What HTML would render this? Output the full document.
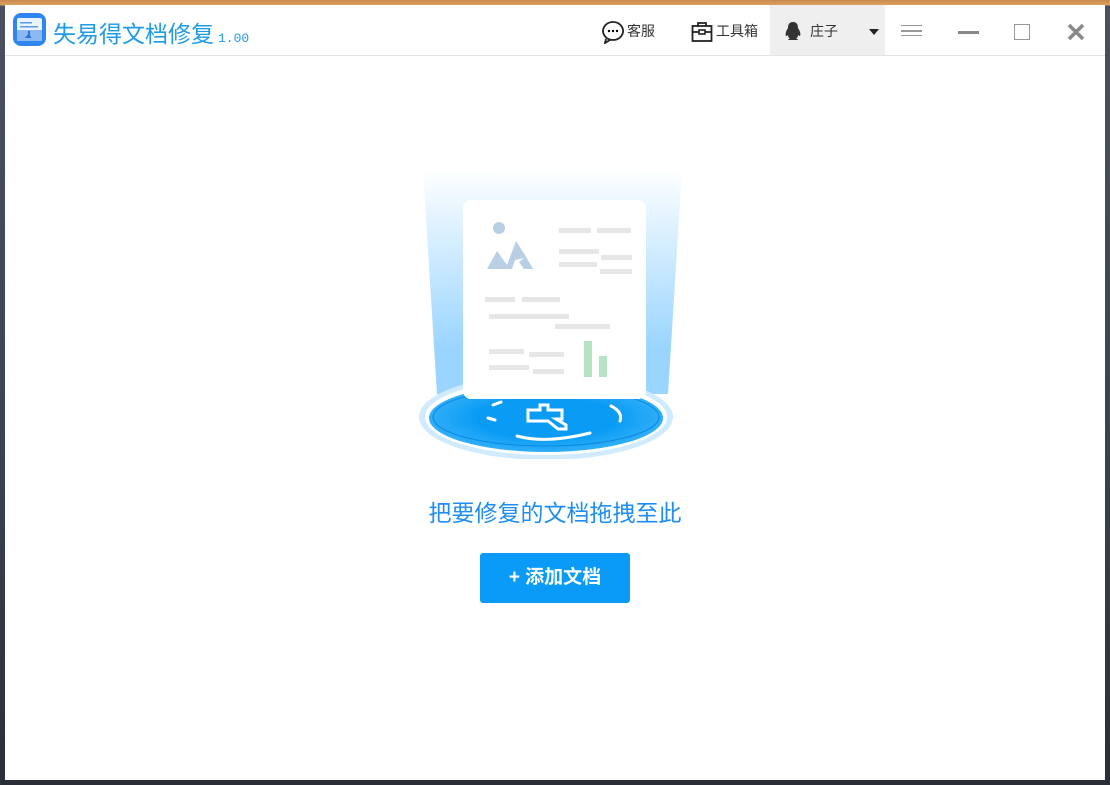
<!DOCTYPE html>
<html><head><meta charset="utf-8"><style>
*{margin:0;padding:0;box-sizing:border-box}
body{width:1110px;height:785px;overflow:hidden;background:linear-gradient(180deg,#c98a4a 0,#d9a060 5px,#4a5060 6px,#3a4250 60%,#2a2e36 100%);position:relative;font-family:"Liberation Sans","Noto Sans CJK SC",sans-serif}
.win{position:absolute;left:5px;top:5px;width:1100px;height:775px;background:#fff}
.hdr{position:absolute;left:0;top:0;width:1100px;height:51px;border-bottom:1px solid #e4e4e4}
.title{position:absolute;left:48px;top:10px;font-size:23px;color:#1e9be8;letter-spacing:0}
.ver{font-family:"Liberation Mono",monospace;font-size:13px;color:#1e9be8;margin-left:4px}
.it{position:absolute;top:16px;font-size:14px;color:#333}
</style></head><body>
<div class="win">
<div class="hdr">
<svg style="position:absolute;left:8px;top:8px" width="33" height="33" viewBox="0 0 33 33"><rect x="0" y="0" width="33" height="33" rx="8" fill="#2f86f0"/><rect x="4" y="5" width="25" height="23" rx="2" fill="#eaf3ff"/><rect x="4" y="17" width="25" height="11" fill="#8bb8f3"/><rect x="7" y="9" width="12" height="1.5" fill="#5a9be8"/><rect x="7" y="13" width="18" height="1.5" fill="#5a9be8"/><path d="M16 18 v4 l-2 2 h4" stroke="#2f6fd8" stroke-width="2" fill="none"/></svg>
<div class="title">失易得文档修复<span class="ver">1.00</span></div>
<svg style="position:absolute;left:596px;top:15px" width="24" height="24" viewBox="0 0 24 24"><path d="M12 2a10 9 0 1 0 0.1 0zM5 19l-1 4 5-3" fill="none" stroke="#222" stroke-width="1.8"/><circle cx="8" cy="11" r="1.2"/><circle cx="12" cy="11" r="1.2"/><circle cx="16" cy="11" r="1.2"/></svg>
<div class="it" style="left:622px">客服</div>
<svg style="position:absolute;left:686px;top:16px" width="22" height="22" viewBox="0 0 22 22"><rect x="1.5" y="5" width="19" height="15" fill="none" stroke="#222" stroke-width="1.8"/><path d="M7 5V2h8v3M1.5 11h19" stroke="#222" stroke-width="1.8" fill="none"/><rect x="8" y="9" width="6" height="4" fill="#fff" stroke="#222" stroke-width="1.6"/></svg>
<div class="it" style="left:711px">工具箱</div>
<div style="position:absolute;left:765px;top:0;width:115px;height:50px;background:#efefef"></div>
<svg style="position:absolute;left:778px;top:16px" width="20" height="22" viewBox="0 0 20 22"><path d="M10 1c-4 0-5 3-5 6-2 3-3 6-2 8 1 0 2-1 2-1 0 2 1 3 2 4-2 0-3 1-1 1h8c2 0 1-1-1-1 1-1 2-2 2-4 0 0 1 1 2 1 1-2 0-5-2-8 0-3-1-6-5-6z" fill="#333"/></svg>
<div class="it" style="left:805px">庄子</div>
<div style="position:absolute;left:864px;top:24px;border:5px solid transparent;border-top:6px solid #222;border-bottom:0"></div>
<div style="position:absolute;left:896px;top:20px;width:21px;height:11px;border-top:1.5px solid #999;border-bottom:1.5px solid #999"></div>
<div style="position:absolute;left:896px;top:25px;width:21px;height:1.5px;background:#999"></div>
<div style="position:absolute;left:953px;top:26px;width:21px;height:3px;background:#888"></div>
<div style="position:absolute;left:1009px;top:19px;width:16px;height:16px;border:1.5px solid #999"></div>
<svg style="position:absolute;left:1062px;top:18px" width="18" height="18" viewBox="0 0 18 18"><path d="M2 2L16 16M16 2L2 16" stroke="#888" stroke-width="3.5"/></svg>
</div>
<svg style="position:absolute;left:410px;top:154px" width="270" height="300" viewBox="0 0 270 300">
<defs><linearGradient id="b" x1="0" y1="0" x2="0" y2="1"><stop offset="0" stop-color="#fff"/><stop offset="0.8" stop-color="#8fd0ff"/></linearGradient>
<radialGradient id="d" cx="0.5" cy="0.5" r="0.5"><stop offset="0.6" stop-color="#0a9cf5"/><stop offset="1" stop-color="#30aef8"/></radialGradient></defs>
<path d="M8 10H267L253 235H22Z" fill="url(#b)" opacity="0.9"/>
<ellipse cx="131" cy="258" rx="127" ry="43" fill="#d0ebff"/>
<ellipse cx="131" cy="258" rx="121" ry="38" fill="#fff"/>
<ellipse cx="131" cy="259" rx="117" ry="34" fill="url(#d)"/>
<ellipse cx="131" cy="258" rx="113" ry="29" fill="none" stroke="#0a88dd" stroke-width="1"/>
<rect x="48" y="41" width="183" height="199" rx="8" fill="#fff"/>
<circle cx="84" cy="69" r="6" fill="#b8cfe6"/>
<path d="M72 110 L82 92 L92 106 L101 82 L110 96 L118 110 L109 110 L104 103 L109 99 L100 101 L97 110 Z" fill="#b8cfe6"/>
<g fill="#e6e6e6"><rect x="144" y="69" width="32" height="5"/><rect x="182" y="69" width="34" height="5"/><rect x="144" y="90" width="40" height="5"/><rect x="186" y="96" width="31" height="5"/><rect x="144" y="103" width="38" height="5"/><rect x="185" y="110" width="32" height="5"/><rect x="70" y="138" width="30" height="5"/><rect x="107" y="138" width="38" height="5"/><rect x="74" y="155" width="80" height="5"/><rect x="140" y="165" width="55" height="5"/><rect x="74" y="190" width="35" height="5"/><rect x="114" y="193" width="35" height="5"/><rect x="74" y="206" width="40" height="5"/><rect x="118" y="210" width="31" height="5"/></g>
<g fill="#b6e3c4"><rect x="169" y="182" width="8" height="36"/><rect x="184" y="197" width="8" height="21"/></g>
<g fill="none" stroke="#fff" stroke-width="3" stroke-linecap="round"><path d="M78 246 L86 243M73 259 L80 261M102 277 Q131 285 175 274M196 247 Q208 253 205 262"/><path d="M113 251 h12 v-5 h8 v5 h14 v9 h-6 l10 6 v4 h-8 l-10 -8 h-20 z"/></g>
</svg>
<div style="position:absolute;left:0;width:1100px;top:489px;text-align:center;font-size:23px;color:#1e8ef0">把要修复的文档拖拽至此</div>
<div style="position:absolute;left:475px;top:548px;width:150px;height:50px;background:#0a9bf8;border-radius:3px;color:#fff;font-size:19px;font-weight:bold;text-align:center;line-height:50px">+ 添加文档</div>
</div>
</body></html>
